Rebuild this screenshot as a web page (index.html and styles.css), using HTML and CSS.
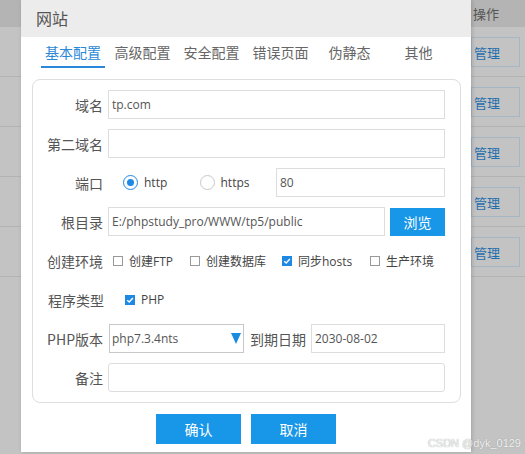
FILE: index.html
```html
<!DOCTYPE html>
<html>
<head>
<meta charset="utf-8">
<link rel="stylesheet" href="styles.css">
</head>
<body>
<div class="bg">
  <div class="bg-head"><span class="bg-op">操作</span></div>
  <div class="bg-row"><span class="bg-btn">管理</span></div>
  <div class="bg-row"><span class="bg-btn">管理</span></div>
  <div class="bg-row"><span class="bg-btn">管理</span></div>
  <div class="bg-row"><span class="bg-btn">管理</span></div>
  <div class="bg-row"><span class="bg-btn">管理</span></div>
</div>

<div class="dialog">
  <div class="dlg-title">网站</div>
  <div class="tabs">
    <div class="tab active">基本配置</div>
    <div class="tab">高级配置</div>
    <div class="tab">安全配置</div>
    <div class="tab">错误页面</div>
    <div class="tab">伪静态</div>
    <div class="tab">其他</div>
  </div>
  <div class="panel">
    <div class="row">
      <label class="lbl">域名</label>
      <div class="input grow">tp.com</div>
    </div>
    <div class="row">
      <label class="lbl">第二域名</label>
      <div class="input grow"></div>
    </div>
    <div class="row">
      <label class="lbl">端口</label>
      <div class="radios">
        <span class="radio on"></span><span class="rtext">http</span>
        <span class="radio"></span><span class="rtext">https</span>
      </div>
      <div class="input grow">80</div>
    </div>
    <div class="row">
      <label class="lbl">根目录</label>
      <div class="input grow">E:/phpstudy_pro/WWW/tp5/public</div>
      <div class="btn-browse">浏览</div>
    </div>
    <div class="row">
      <label class="lbl">创建环境</label>
      <div class="checks">
        <span class="citem w1"><span class="cb"></span><span class="ctext">创建FTP</span></span>
        <span class="citem w2"><span class="cb"></span><span class="ctext">创建数据库</span></span>
        <span class="citem w3"><span class="cb on"><svg viewBox="0 0 10 10"><path d="M2.2 5.2 L4.2 7 L7.9 3" fill="none" stroke="#fff" stroke-width="1.4"/></svg></span><span class="ctext">同步hosts</span></span>
        <span class="citem"><span class="cb"></span><span class="ctext">生产环境</span></span>
      </div>
    </div>
    <div class="row">
      <label class="lbl lbl2">程序类型</label>
      <div class="checks checks2">
        <span class="citem"><span class="cb on"><svg viewBox="0 0 10 10"><path d="M2.2 5.2 L4.2 7 L7.9 3" fill="none" stroke="#fff" stroke-width="1.4"/></svg></span><span class="ctext">PHP</span></span>
      </div>
    </div>
    <div class="row">
      <label class="lbl">PHP版本</label>
      <div class="select">php7.3.4nts<svg class="arrow" viewBox="0 0 10 11"><path d="M0 0 H10 L5 11 Z" fill="#1a8be0"/></svg></div>
      <label class="lbl-inline">到期日期</label>
      <div class="input grow">2030-08-02</div>
    </div>
    <div class="row">
      <label class="lbl">备注</label>
      <div class="input grow round"></div>
    </div>
  </div>
  <div class="actions">
    <div class="btn">确认</div>
    <div class="btn">取消</div>
  </div>
</div>

<div class="watermark">CSDN @dyk_0129</div>
</body>
</html>
```

FILE: styles.css
```css
* { box-sizing: border-box; }
html, body {
  margin: 0;
  padding: 0;
  width: 525px;
  height: 454px;
  overflow: hidden;
  font-family: "Noto Sans CJK SC", sans-serif;
  font-size: 14px;
}
body { position: relative; background: #c3c3c3; }

.bg { width: 525px; height: 454px; background: #c3c3c3; }
.bg-head {
  height: 27px;
  background: #b4b4b4;
  display: flex;
  align-items: center;
  padding-left: 473px;
}
.bg-op { color: #555; font-size: 13px; }
.bg-row {
  height: 50px;
  border-bottom: 1px solid #b3b3b3;
  padding-top: 10px;
  padding-left: 471px;
}
.bg-btn {
  display: flex;
  align-items: center;
  width: 49px;
  height: 30px;
  border: 1px solid #a6b6c2;
  color: #1f6fae;
  font-size: 13px;
  padding-left: 2px;
}

.dialog {
  position: absolute;
  left: 21px;
  top: 0;
  width: 450px;
  height: 452px;
  background: #fff;
  box-shadow: 1px 0 4px rgba(0,0,0,0.18);
}
.dlg-title {
  height: 37px;
  background: #ececec;
  color: #555;
  font-size: 16px;
  line-height: 37px;
  padding-left: 15px;
}
.tabs {
  display: flex;
  height: 31px;
  padding-left: 18px;
}
.tab {
  width: 69px;
  text-align: center;
  color: #666;
  font-size: 14px;
  line-height: 31px;
}
.tab.active {
  color: #2a88d8;
  border-bottom: 2px solid #2a88d8;
  width: 64px;
  margin-left: 2px;
  margin-right: 3px;
}

.panel {
  margin: 11px 10px 0 11px;
  border: 1px solid #dedede;
  border-radius: 8px;
  padding: 10px 15px 10px 0;
}
.row {
  display: flex;
  align-items: center;
  height: 29px;
  margin-bottom: 10px;
}
.row:last-child { margin-bottom: 0; }
.lbl {
  width: 70px;
  text-align: right;
  margin-right: 5px;
  color: #555;
  font-size: 14px;
  flex: none;
}
.lbl2 { margin-right: 7px; width: 71px; }
.input {
  height: 29px;
  border: 1px solid #ddd;
  color: #555;
  font-family: "Open Sans", "Noto Sans CJK SC", sans-serif;
  font-size: 12px;
  padding-left: 3px;
  line-height: 27px;
  white-space: nowrap;
  overflow: hidden;
}
.grow { flex: 1; }
.round { border-radius: 3px; }

.radios {
  display: flex;
  align-items: center;
  padding-left: 15px;
  width: 168px;
  flex: none;
}
.radio {
  width: 15px;
  height: 15px;
  border-radius: 50%;
  border: 1px solid #c8c8c8;
  background: #fff;
  flex: none;
  position: relative;
}
.radio.on { border-color: #1e88e5; }
.radio.on::after {
  content: "";
  position: absolute;
  left: 3px; top: 3px;
  width: 7px; height: 7px;
  border-radius: 50%;
  background: #1e88e5;
}
.rtext {
  color: #444;
  font-family: "Open Sans", "Noto Sans CJK SC", sans-serif;
  font-size: 12px;
  margin-left: 6px;
  width: 56px;
}

.btn-browse {
  width: 55px;
  height: 28px;
  margin-left: 5px;
  background: #1896e7;
  color: #fff;
  font-size: 14px;
  display: flex;
  align-items: center;
  justify-content: center;
  flex: none;
}

.checks {
  display: flex;
  align-items: center;
  padding-left: 5px;
  white-space: nowrap;
}
.checks2 { padding-left: 14px; }
.citem { display: flex; align-items: center; flex: none; }
.w1 { width: 77px; }
.w2 { width: 92px; }
.w3 { width: 88px; }
.cb {
  width: 10px;
  height: 10px;
  border: 1px solid #999;
  background: #fff;
  flex: none;
  display: flex;
}
.cb svg { width: 10px; height: 10px; display: block; }
.cb.on { background: #1e88e5; border-color: #1e88e5; }
.cb.on svg { margin: -1px; }
.ctext {
  color: #444;
  font-family: "Open Sans", "Noto Sans CJK SC", sans-serif;
  font-size: 12px;
  margin-left: 6px;
}

.select {
  width: 135px;
  flex: none;
  height: 29px;
  border: 1px solid #c8c8c8;
  color: #555;
  font-family: "Open Sans", "Noto Sans CJK SC", sans-serif;
  font-size: 12px;
  padding-left: 2px;
  display: flex;
  align-items: center;
  justify-content: space-between;
  padding-right: 2px;
  margin-left: 1px;
}
.arrow { width: 10px; height: 11px; }
.lbl-inline {
  color: #555;
  font-size: 14px;
  margin-left: 6px;
  margin-right: 5px;
  flex: none;
}

.actions {
  display: flex;
  justify-content: center;
  gap: 10px;
  margin-top: 11px;
}
.btn {
  width: 85px;
  height: 30px;
  background: #1896e7;
  color: #fff;
  font-size: 14px;
  display: flex;
  align-items: center;
  justify-content: center;
}

.watermark {
  position: absolute;
  right: 4px;
  top: 437px;
  font-size: 11px;
  color: #f4f4f4;
  text-shadow: 0 0 1px #888;
  font-family: "Liberation Sans", sans-serif;
  white-space: nowrap;
}
```
